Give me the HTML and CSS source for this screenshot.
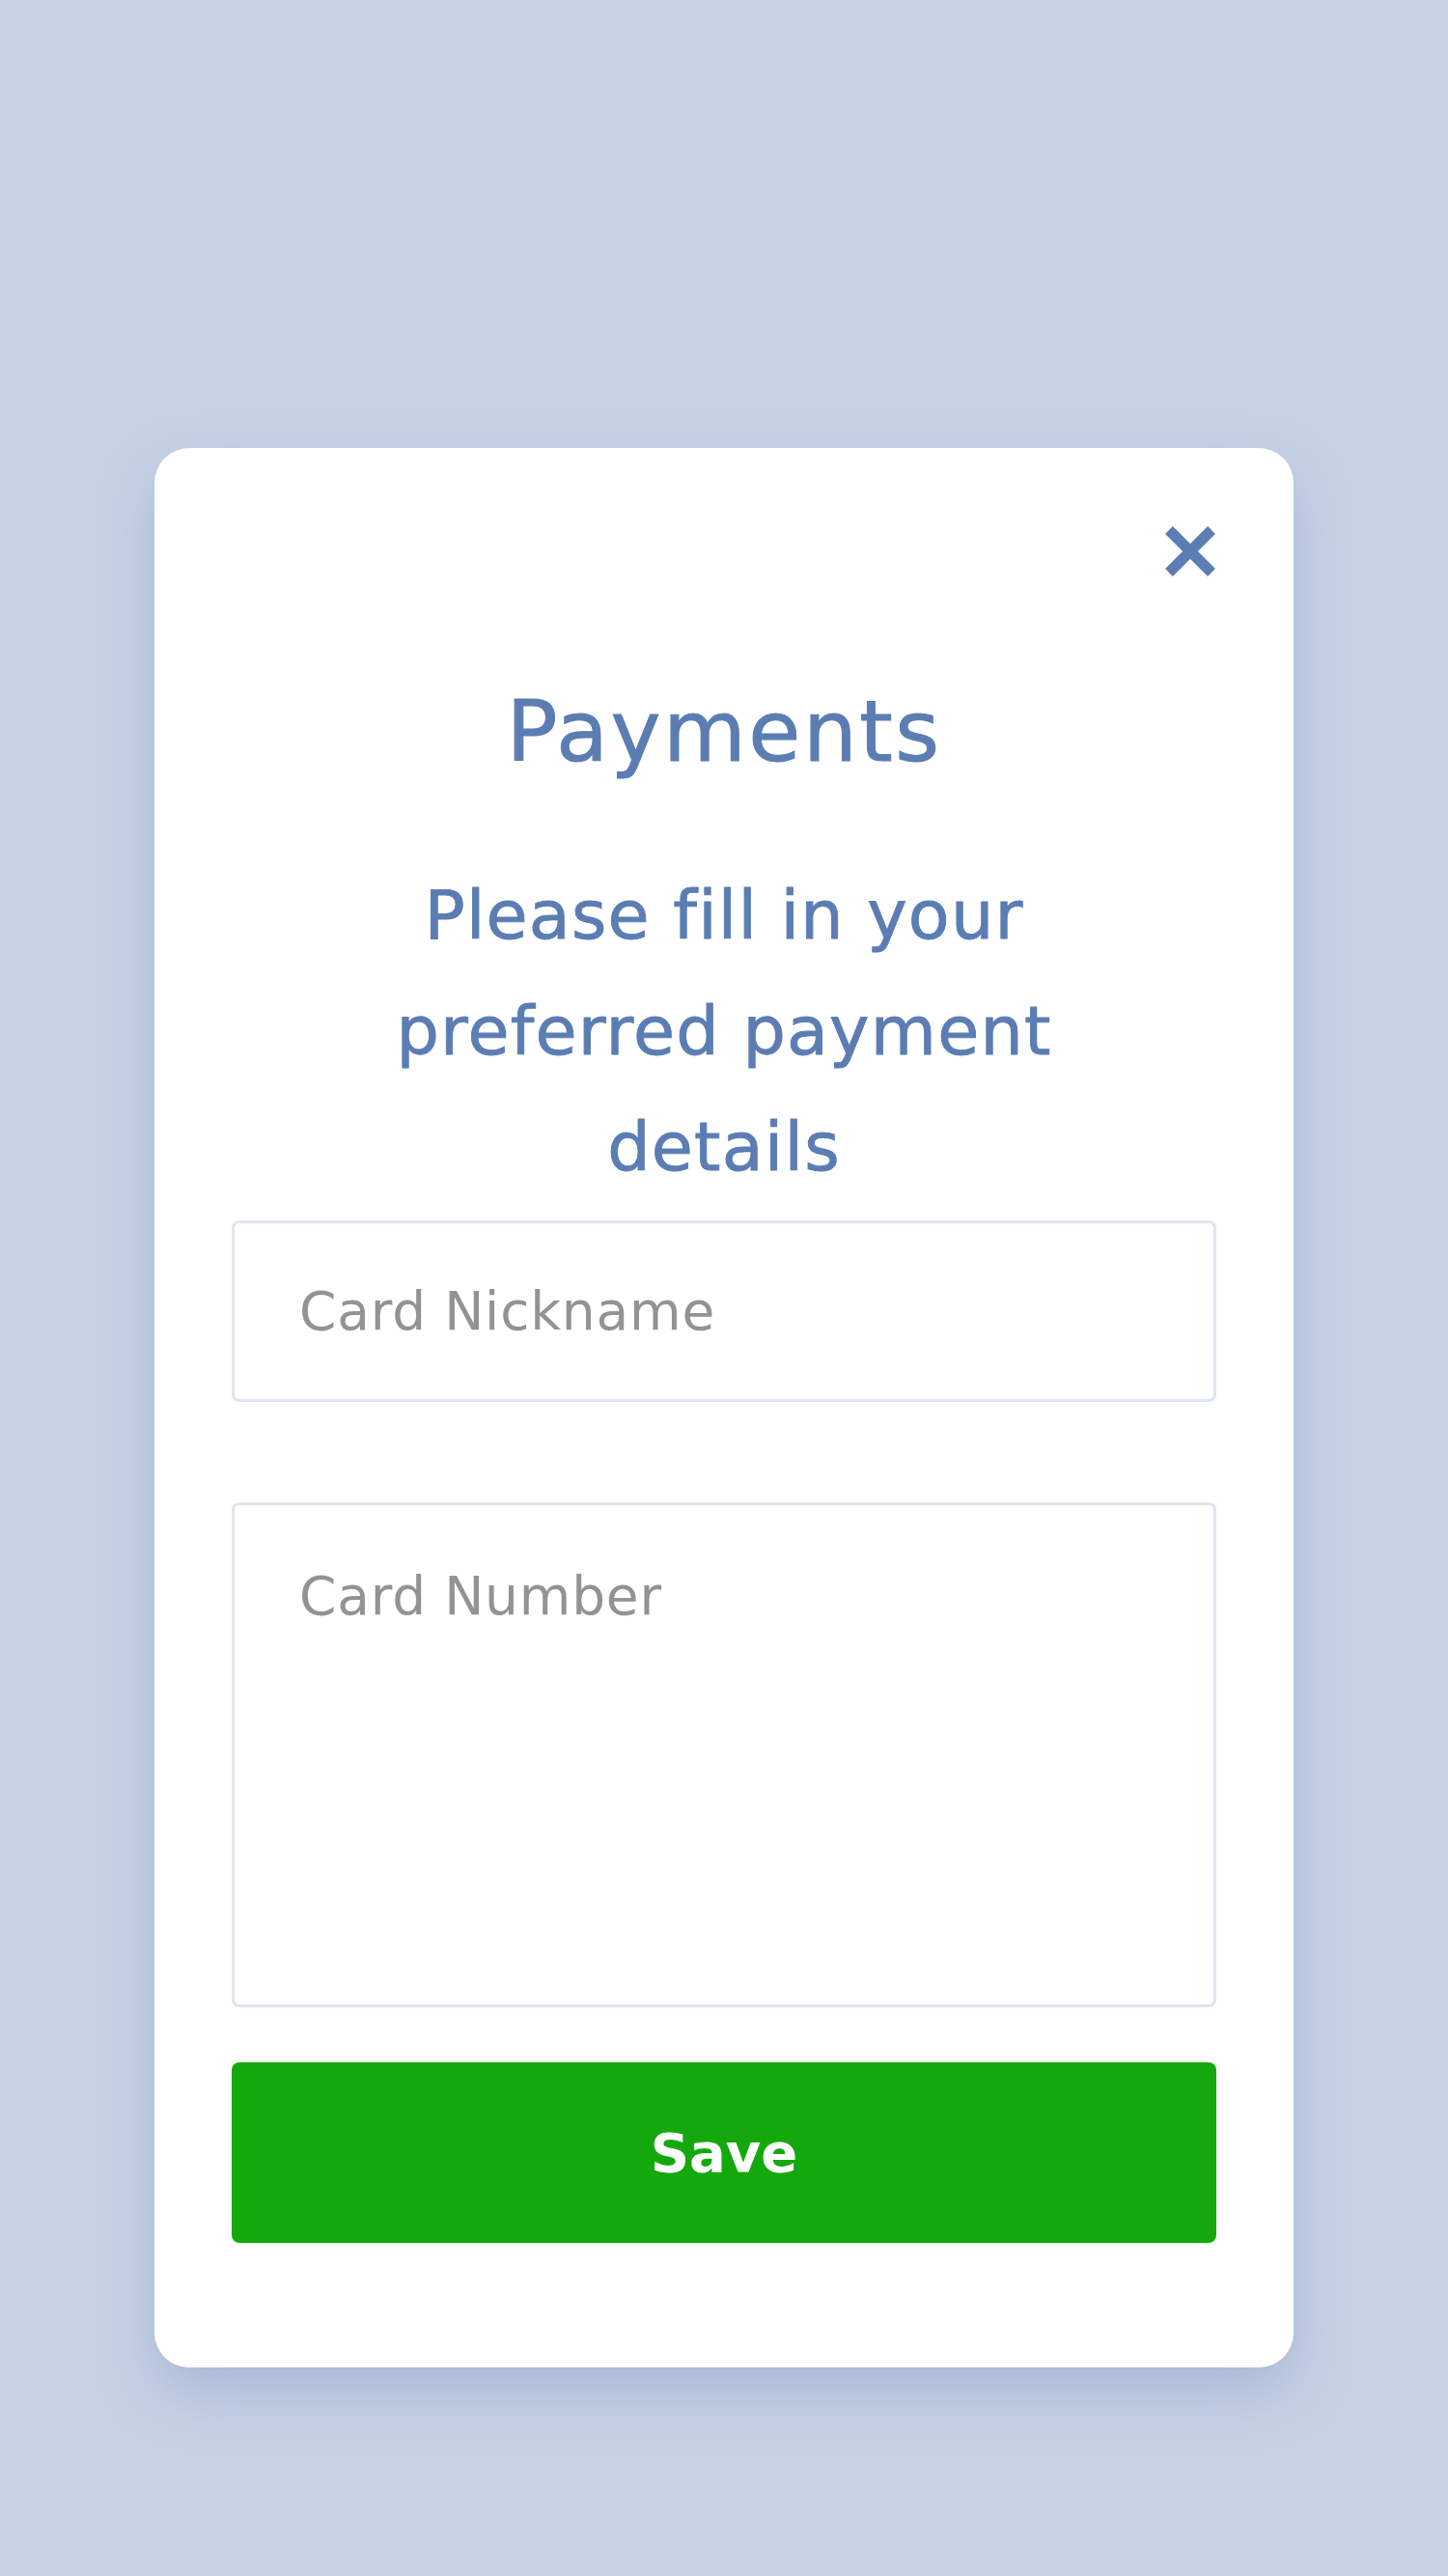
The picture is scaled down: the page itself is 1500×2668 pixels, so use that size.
FILE: index.html
```html
<!DOCTYPE html>
<html lang="en">
<head>
<meta charset="utf-8">
<title>Payments</title>
<link rel="stylesheet" href="styles.css">
</head>
<body>
<main class="page">
  <section class="modal">
    <div class="modal-head">
      <button class="close" type="button" aria-label="Close">
        <svg viewBox="0 0 56 56" width="56" height="56">
          <path d="M6 6 L50 50 M50 6 L6 50" stroke="#5b7db3" stroke-width="11" stroke-linecap="butt" fill="none"/>
        </svg>
      </button>
    </div>
    <h1 class="title">Payments</h1>
    <p class="subtitle">Please fill in your preferred payment details</p>
    <form class="form">
      <input class="field" type="text" placeholder="Card Nickname">
      <textarea class="field area" placeholder="Card Number"></textarea>
      <button class="save" type="button">Save</button>
    </form>
  </section>
</main>
</body>
</html>
```

FILE: styles.css
```css
html, body {
  margin: 0;
  padding: 0;
}
body {
  background: #c7d2e4;
  font-family: "DejaVu Sans", "Liberation Sans", sans-serif;
  min-height: 2668px;
}
.page {
  padding-top: 464px;
  display: flex;
  justify-content: center;
}
.modal {
  box-sizing: border-box;
  width: 1180px;
  background: #ffffff;
  border-radius: 36px;
  padding: 79px 80px 129px;
  box-shadow: 0 26px 60px rgba(120, 145, 190, 0.4);
  display: flex;
  flex-direction: column;
}
.modal-head {
  display: flex;
  justify-content: flex-end;
}
.close {
  width: 56px;
  height: 56px;
  padding: 0;
  margin: 0 -1px 0 0;
  border: 0;
  background: none;
  display: block;
}
.close svg {
  display: block;
}
.title {
  margin: 109px 0 0;
  font-size: 88px;
  line-height: 100px;
  font-weight: normal;
  letter-spacing: 2.5px;
  color: #5b7db3;
  text-align: center;
  -webkit-text-stroke: 1px #5b7db3;
}
.subtitle {
  margin: 80px auto 0;
  max-width: 720px;
  font-size: 70px;
  line-height: 120px;
  letter-spacing: 1.2px;
  color: #5b7db3;
  text-align: center;
  -webkit-text-stroke: 0.9px #5b7db3;
}
.form {
  margin-top: 16px;
  display: flex;
  flex-direction: column;
}
.field {
  box-sizing: border-box;
  width: 100%;
  border: 3px solid #dfe6f0;
  border-radius: 8px;
  background: #fff;
  font-family: "DejaVu Sans", "Liberation Sans", sans-serif;
  font-size: 55px;
  letter-spacing: 0.8px;
  color: #555;
  padding: 0 0 0 67px;
  outline: none;
  margin: 0;
}
.field::placeholder {
  color: #939393;
  opacity: 1;
}
input.field {
  height: 188px;
}
.area {
  margin-top: 104px;
  height: 523px;
  padding-top: 62px;
  line-height: normal;
  resize: none;
  display: block;
}
.save {
  margin-top: 57px;
  height: 187px;
  width: 100%;
  border: 0;
  border-radius: 8px;
  background: #13a90d;
  color: #ffffff;
  font-family: "DejaVu Sans", "Liberation Sans", sans-serif;
  font-weight: bold;
  font-size: 56px;
  padding: 0;
}
```
